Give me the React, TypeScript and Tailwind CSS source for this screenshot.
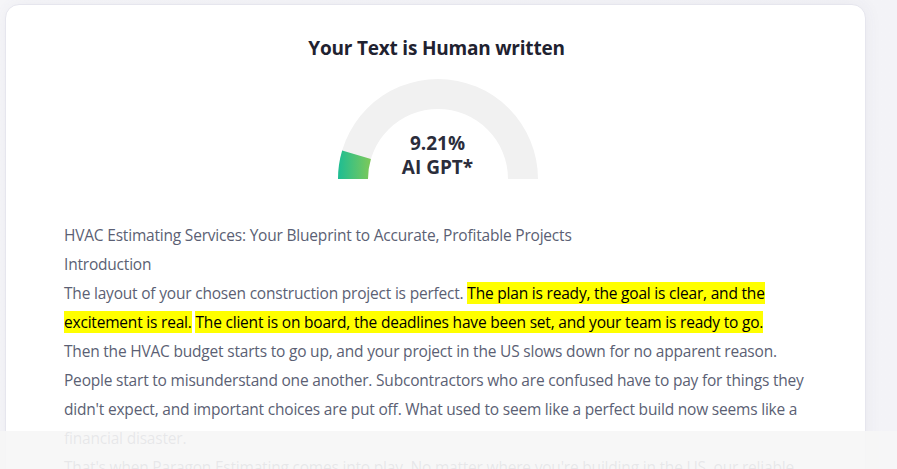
export default function App() {
  return (
    <div className="relative h-[469px] w-[897px] overflow-hidden bg-gradient-to-r from-[#f6f6f9] to-[#f3f3f7]" style={{ fontFamily: '"Open Sans", "Noto Sans", sans-serif' }}>
      <div className="ml-[5px] mt-[4px] w-[861px] rounded-[14px] border border-[#e6e6ee] bg-white shadow-[0_0_18px_rgba(60,60,100,0.06)] pt-[29px] pl-[58px] pr-[52px]">
        <h2 className="-translate-x-[2px] text-center text-[19px] font-bold leading-[28px] text-[#1f2230] tracking-[-0.2px]">Your Text is Human written</h2>

        {/* gauge */}
        <div className="relative mx-auto mt-[17px] h-[100px] w-[200px] -translate-x-[1px]">
          <svg width="200" height="100" viewBox="0 0 200 100">
            <defs>
              <linearGradient id="g" x1="0" y1="0" x2="1" y2="0">
                <stop offset="0" stopColor="#1dbd93" />
                <stop offset="1" stopColor="#7ec959" />
              </linearGradient>
            </defs>
            <path d="M0,100 A100,100 0 0 1 200,100 L170,100 A70,70 0 0 0 30,100 Z" fill="#f1f1f1" />
            <path d="M0,100 A100,100 0 0 1 4.16,71.47 L32.91,80.03 A70,70 0 0 0 30,100 Z" fill="url(#g)" />
          </svg>
          <div className="absolute inset-x-0 top-[52px] flex flex-col items-center text-[19px] font-bold leading-[24px] text-[#2b2d3b]">
            <span>9.21%</span>
            <span>AI GPT*</span>
          </div>
        </div>

        <div className="mt-[42px] text-[15.5px] leading-[29px] text-[#5b5f74] tracking-[-0.2px]">
          <p>HVAC Estimating Services: Your Blueprint to Accurate, Profitable Projects</p>
          <p>Introduction</p>
          <p>
            The layout of your chosen construction project is perfect.{" "}
            <span className="bg-[#ffff00] text-black">The plan is ready, the goal is clear, and the excitement is real.</span>{" "}
            <span className="bg-[#ffff00] text-black">The client is on board, the deadlines have been set, and your team is ready to go.</span>
            <br />
            Then the HVAC budget starts to go up, and your project in the US slows down for no apparent reason. People start to misunderstand one another. Subcontractors who are confused have to pay for things they didn't expect, and important choices are put off. What used to seem like a perfect build now seems like a financial disaster.
          </p>
          <p>
            That's when Paragon Estimating comes into play. No matter where you're building in the US, our reliable HVAC estimating services give you the clarity you need to stay on budget and on schedule.
          </p>
        </div>
      </div>

      {/* bottom bar overlay */}
      <div className="absolute inset-x-0 bottom-0 h-[38px] bg-[#f6f6f6]/90" />
    </div>
  )
}
